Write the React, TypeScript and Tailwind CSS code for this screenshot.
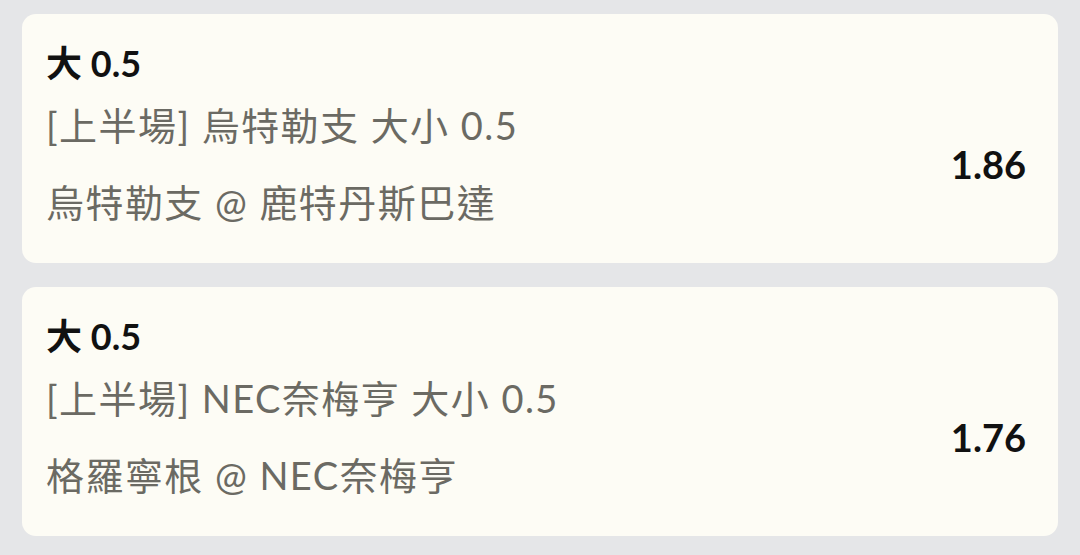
import React from 'react';

interface Bet {
  pick: string;
  market: string;
  match: string;
  odds: string;
}

const bets: Bet[] = [
  { pick: '大 0.5', market: '[上半場] 烏特勒支 大小 0.5', match: '烏特勒支 @ 鹿特丹斯巴達', odds: '1.86' },
  { pick: '大 0.5', market: '[上半場] NEC奈梅亨 大小 0.5', match: '格羅寧根 @ NEC奈梅亨', odds: '1.76' },
];

const BetCard: React.FC<{ bet: Bet }> = ({ bet }) => (
  <div className="rounded-[14px] bg-[#fdfcf5] pl-6 pr-8 pt-[25px] pb-[22px]">
    <p className="text-[36px] leading-[48px] font-bold text-[#111111]">{bet.pick}</p>
    <div className="flex items-center justify-between">
      <div className="text-[38px] leading-[77px] tracking-[1.45px] text-[#6b6a63]">
        <p>{bet.market}</p>
        <p>{bet.match}</p>
      </div>
      <span className="text-[38px] font-bold text-[#111111]">{bet.odds}</span>
    </div>
  </div>
);

export default function App() {
  return (
    <div
      className="min-h-[555px] bg-[#e5e6e8] px-[22px] pt-[14px] pb-5 flex flex-col gap-6"
      style={{ fontFamily: 'Lato, "Noto Sans CJK TC", sans-serif' }}
    >
      {bets.map((bet, idx) => (
        <BetCard key={idx} bet={bet} />
      ))}
    </div>
  );
}
